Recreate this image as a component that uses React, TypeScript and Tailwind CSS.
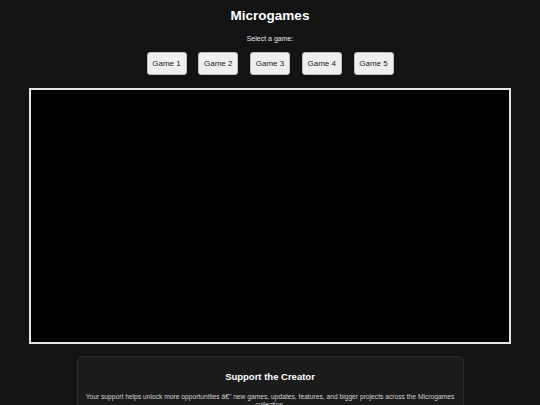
const games = ["Game 1", "Game 2", "Game 3", "Game 4", "Game 5"];

export default function App() {
  return (
    <div
      className="flex min-h-screen flex-col items-center bg-[#131313] text-white"
      style={{ fontFamily: '"Liberation Sans", Arial, sans-serif' }}
    >
      <h1 className="mt-[7px] text-[13.5px] font-bold leading-[18px]">Microgames</h1>
      <p className="mt-[9px] text-[7px] leading-[9px] text-[#e6e6e6]">Select a game:</p>

      <div className="mt-[9px] flex gap-[11.75px]">
        {games.map((g) => (
          <button
            key={g}
            type="button"
            className="h-[23px] w-[40px] rounded-[3px] border border-[#bdbdbd] bg-[#efefef] text-[8px] text-[#1a1a1a]"
          >
            {g}
          </button>
        ))}
      </div>

      <div className="mt-[13px] h-[256px] w-[482px] border-2 border-[#e4e4e4] bg-black" />

      <div className="mt-[12px] w-[387px] rounded-[5px] border border-[#2c2c2c] bg-[#1b1b1b] px-[6px] pt-[14px] pb-[8px] text-center">
        <h2 className="text-[9.5px] font-bold leading-[12px]">Support the Creator</h2>
        <p className="mt-[10px] text-[6.7px] leading-[8px] text-[#d0d0d0]">
          Your support helps unlock more opportunities â€" new games, updates, features, and bigger projects across the Microgames collection.
        </p>
      </div>
    </div>
  );
}
